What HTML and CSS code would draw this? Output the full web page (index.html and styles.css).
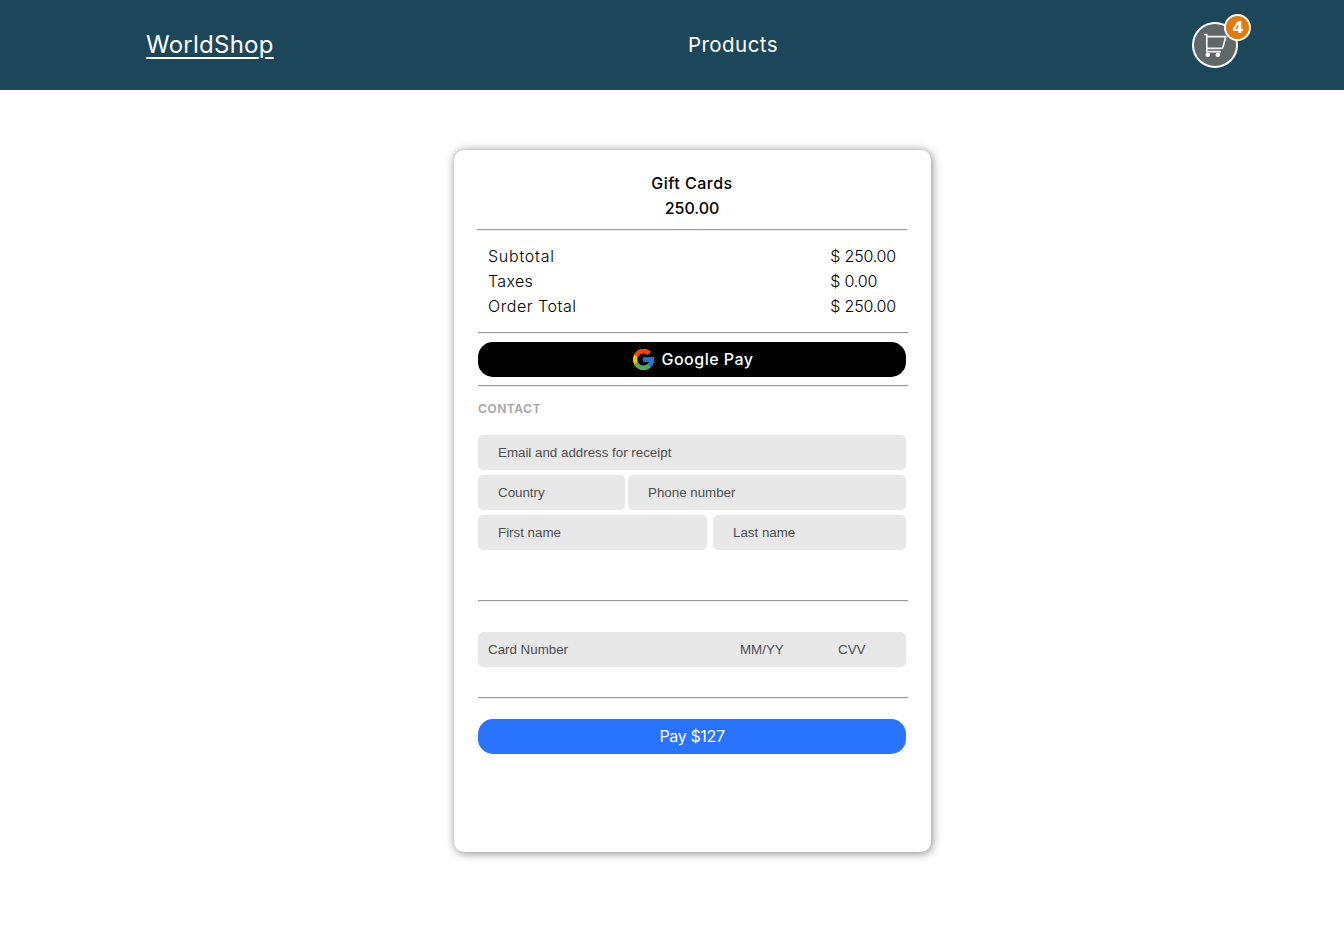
FILE: index.html
```html
<!DOCTYPE html>
<html lang="en">
<head>
<meta charset="utf-8">
<title>WorldShop</title>
<link rel="stylesheet" href="styles.css">
</head>
<body>
<header class="navbar">
  <a class="brand" href="#">WorldShop</a>
  <a class="nav-link" href="#">Products</a>
  <button class="cart" type="button" aria-label="Cart">
    <svg class="cart-icon" width="26" height="26" viewBox="0 0 26 26" fill="none" stroke="#f4f4f4" stroke-width="1.7" stroke-linecap="round" stroke-linejoin="round">
      <path d="M2.8 2.5h2v17.2h13.4M4.8 4.6h19l-2.9 10.6q-.4 1.2-1.7 1.2H4.8"/>
      <circle cx="5.8" cy="22.7" r="2.3" fill="#fff" stroke="none"/>
      <circle cx="15.8" cy="22.7" r="2.3" fill="#fff" stroke="none"/>
    </svg>
    <span class="badge">4</span>
  </button>
</header>
<main class="page">
  <section class="checkout">
    <div class="summary">
      <p class="product">Gift Cards</p>
      <p class="price">250.00</p>
    </div>
    <hr class="rule rule-summary">
    <div class="totals">
      <div class="labels"><p class="l-sub">Subtotal</p><p class="l-tax">Taxes</p><p class="l-total">Order Total</p></div>
      <div class="amounts"><p>$ 250.00</p><p>$ 0.00</p><p>$ 250.00</p></div>
    </div>
    <hr class="rule">
    <button class="google-pay" type="button">
      <svg width="21" height="21" viewBox="4 4 40 40">
        <path fill="#FFC107" d="M43.611 20.083H42V20H24v8h11.303C33.654 32.657 29.223 36 24 36c-6.627 0-12-5.373-12-12s5.373-12 12-12c3.059 0 5.842 1.154 7.961 3.039l5.657-5.657C34.046 6.053 29.268 4 24 4 12.955 4 4 12.955 4 24s8.955 20 20 20 20-8.955 20-20c0-1.341-.138-2.65-.389-3.917z"/>
        <path fill="#FF3D00" d="M6.306 14.691l6.571 4.819C14.655 15.108 18.961 12 24 12c3.059 0 5.842 1.154 7.961 3.039l5.657-5.657C34.046 6.053 29.268 4 24 4 16.318 4 9.656 8.337 6.306 14.691z"/>
        <path fill="#4CAF50" d="M24 44c5.166 0 9.86-1.977 13.409-5.192l-6.19-5.238C29.211 35.091 26.715 36 24 36c-5.202 0-9.619-3.317-11.283-7.946l-6.522 5.025C9.505 39.556 16.227 44 24 44z"/>
        <path fill="#1976D2" d="M43.611 20.083H42V20H24v8h11.303c-.792 2.237-2.231 4.166-4.087 5.571l6.193 5.238C36.971 39.205 44 34 44 24c0-1.341-.138-2.65-.389-3.917z"/>
      </svg>
      <span class="google-label">Google Pay</span>
    </button>
    <hr class="rule">
    <h2 class="heading">CONTACT</h2>
    <form class="form">
      <div class="row"><input class="field" placeholder="Email and address for receipt"></div>
      <div class="row row-phone"><input class="field" placeholder="Country"><input class="field" placeholder="Phone number"></div>
      <div class="row row-name"><input class="field" placeholder="First name"><input class="field" placeholder="Last name"></div>
      <hr class="rule rule-contact">
      <div class="card-fields"><input class="card-input" placeholder="Card Number"><input class="card-input" placeholder="MM/YY"><input class="card-input" placeholder="CVV"></div>
      <hr class="rule">
      <button class="pay" type="button">Pay $127</button>
    </form>
  </section>
</main>
</body>
</html>
```
FILE: styles.css
```css
* { box-sizing: border-box; }
body { margin: 0; background: #fff; color: #000; font-family: Inter, sans-serif; }
p, h2 { margin: 0; }
button { border: 0; padding: 0; font-family: inherit; }

.navbar { display: grid; grid-template-columns: 542px 504px 46px; height: 90px; padding: 0 106px 0 146px; align-items: center; background: #1c4659; }
.brand, .nav-link { color: #fff; justify-self: start; white-space: nowrap; padding-bottom: 2px; }
.brand { font-size: 24px; font-weight: 400; letter-spacing: .25px; text-decoration-thickness: 2px; text-underline-offset: 4px; }
.nav-link { font-size: 20.5px; font-weight: 400; letter-spacing: .45px; text-decoration: none; }
.cart { position: relative; display: grid; place-items: center; width: 46px; height: 46px; border: 2px solid #fff; border-radius: 50%; background: #5f6769; }
.badge { position: absolute; top: -10px; right: -15px; width: 27px; height: 27px; padding-left: 1px; border: 2px solid #fff; border-radius: 50%; background: #e07b0a; color: #fff; font: bold 16px/23px "DejaVu Sans", sans-serif; text-align: center; }

.page { min-height: 846px; padding-top: 60px; }
.checkout { width: 477px; height: 702px; margin-left: 454px; padding: 21px 23px 0 24px; border-radius: 10px; background: #fff; box-shadow: 1px 1px 10px rgba(0, 0, 0, .5); }
.summary { width: 428px; height: 58px; text-align: center; font-size: 16px; font-weight: 500; line-height: 25px; }
.product { letter-spacing: .5px; }
.rule { width: 430px; height: 2px; margin: 0; border: 0; border-top: 1px solid #9a9a9a; border-bottom: 1px solid #eee; }
.rule-summary { margin-left: -1px; }
.totals { display: flex; justify-content: space-between; height: 101px; padding: 13px 12px 0 10px; font-size: 16px; font-weight: 300; line-height: 25px; }
.l-sub { letter-spacing: .75px; }
.l-tax { letter-spacing: .35px; }
.l-total { letter-spacing: .55px; }
.amounts { letter-spacing: -.2px; }
.google-pay { display: flex; align-items: center; justify-content: center; gap: 7px; width: 428px; height: 35px; margin: 8px 0; padding-left: 2px; border-radius: 15px; background: #000; color: #fff; font-size: 16px; font-weight: 500; }
.google-label { padding-bottom: 1px; letter-spacing: .5px; margin-right: -1px; }
.heading { height: 48px; padding-top: 12px; color: #a5a5a5; font-size: 12px; font-weight: 600; line-height: 20px; letter-spacing: .55px; }
.form { display: flex; flex-direction: column; }
.row { display: grid; width: 428px; margin-bottom: 5px; }
.row-phone { grid-template-columns: 147px 278px; gap: 3px; }
.row-name { grid-template-columns: 229px 193px; gap: 6px; }
.field, .card-input { min-width: 0; border: 0; background: #e8e8e8; font: 13.333px "Liberation Sans", Arial, sans-serif; }
.field { height: 35px; padding: 0 20px; border-radius: 5px; }
::placeholder { color: #4f4f4f; opacity: 1; }
.rule-contact { margin: 45px 0 30px; }
.card-fields { display: grid; grid-template-columns: 252px 98px 60px; width: 428px; height: 35px; margin-bottom: 30px; padding-left: 10px; border-radius: 5px; background: #e8e8e8; }
.card-input { padding: 0; background: transparent; }
.pay { width: 428px; height: 35px; margin-top: 20px; padding-bottom: 2px; border-radius: 15px; background: #2874ff; color: #fff; font-size: 16px; font-weight: 400; letter-spacing: -.35px; }
```
